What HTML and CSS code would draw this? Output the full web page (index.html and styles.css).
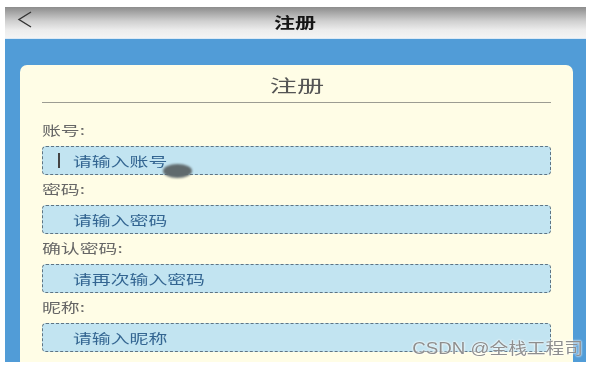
FILE: index.html
```html
<!DOCTYPE html>
<html lang="zh-CN">
<head>
    <meta charset="UTF-8">
    <meta name="viewport" content="width=device-width, initial-scale=1.0">
    <title>注册</title>
    <link rel="stylesheet" href="styles.css">
</head>
<body>
    <div class="app">
        <header class="topbar">
            <svg class="back" width="16" height="18" viewBox="0 0 16 18">
                <polyline points="14,1 2,8.5 14,16" fill="none" stroke="#333" stroke-width="1.4"/>
            </svg>
            <span class="topbar-title">注册</span>
        </header>

        <main class="content">
            <div class="card">
                <div class="card-title"><span>注册</span></div>
                <div class="divider"></div>

                <div class="form">
                    <div class="group">
                        <div class="label"><span>账号:</span></div>
                        <div class="field">
                            <span class="caret"></span>
                            <span class="ph">请输入账号</span>
                            <span class="pointer"></span>
                        </div>
                    </div>
                    <div class="group">
                        <div class="label"><span>密码:</span></div>
                        <div class="field"><span class="ph">请输入密码</span></div>
                    </div>
                    <div class="group">
                        <div class="label"><span>确认密码:</span></div>
                        <div class="field"><span class="ph">请再次输入密码</span></div>
                    </div>
                    <div class="group">
                        <div class="label"><span>昵称:</span></div>
                        <div class="field"><span class="ph">请输入昵称</span></div>
                    </div>
                </div>
            </div>
        </main>
    </div>

    <div class="watermark">CSDN @全栈工程司</div>
</body>
</html>
```

FILE: styles.css
```css
body {
    margin: 0;
    background-color: #ffffff;
    font-family: "Noto Sans CJK SC", "Noto Sans", sans-serif;
    overflow: hidden;
}

.app {
    margin: 7px 0 0 5px;
    width: 581px;
}

/* top navigation bar */
.topbar {
    position: relative;
    height: 31px;
    background: linear-gradient(#8c8c8c 0%, #cfcfcf 45%, #ededed 75%, #f4f4f4 100%);
    border-bottom: 1px solid #dbe9f5;
    display: flex;
    align-items: center;
    justify-content: center;
}

.back {
    position: absolute;
    left: 12px;
    top: 4px;
}

.topbar-title {
    display: inline-block;
    font-size: 15px;
    font-weight: bold;
    color: #151515;
    transform: scaleX(1.4);
    margin-top: -2px;
}

.content {
    background-color: #519cd7;
    height: 323px;
    padding: 26px 13px 0 15px;
    box-sizing: border-box;
    overflow: hidden;
}

.card {
    background-color: #fffde6;
    border-radius: 7px 7px 0 0;
    padding: 7px 22px 20px 22px;
    height: 320px;
}

.card-title {
    text-align: center;
    height: 26px;
    line-height: 26px;
    font-size: 17px;
    color: #555;
}

.card-title span {
    display: inline-block;
    transform: scaleX(1.6);
}

.divider {
    margin-top: 4px;
    border-top: 1px solid #9c9c92;
}

.form {
    margin-top: 18px;
}

.group {
    margin-bottom: 5px;
}

.label {
    height: 18px;
    line-height: 18px;
    font-size: 13px;
    color: #666;
    margin-bottom: 7px;
}

.label span {
    display: inline-block;
    transform: scaleX(1.45);
    transform-origin: left center;
}

.field {
    position: relative;
    height: 29px;
    box-sizing: border-box;
    background-color: #c2e4f1;
    border: 1px dashed #5d7484;
    border-radius: 4px;
    padding-left: 30px;
    line-height: 27px;
    font-size: 13px;
    color: #336591;
}

.ph {
    display: inline-block;
    transform: scaleX(1.45);
    transform-origin: left center;
}

.caret {
    position: absolute;
    left: 15px;
    top: 6px;
    width: 2px;
    height: 15px;
    background-color: #444;
}

.pointer {
    position: absolute;
    left: 120px;
    top: 17px;
    width: 29px;
    height: 14px;
    border-radius: 50%;
    background-color: #606a6d;
    filter: blur(1.2px);
}

.watermark {
    position: absolute;
    right: 15px;
    bottom: 9px;
    font-family: "Liberation Sans", "Noto Sans CJK SC", sans-serif;
    font-size: 16px;
    color: #8e8e8e;
    text-shadow: 0 0 2px #fff, 0 0 2px #fff;
    transform: scaleX(1.17);
    transform-origin: right center;
}
```
